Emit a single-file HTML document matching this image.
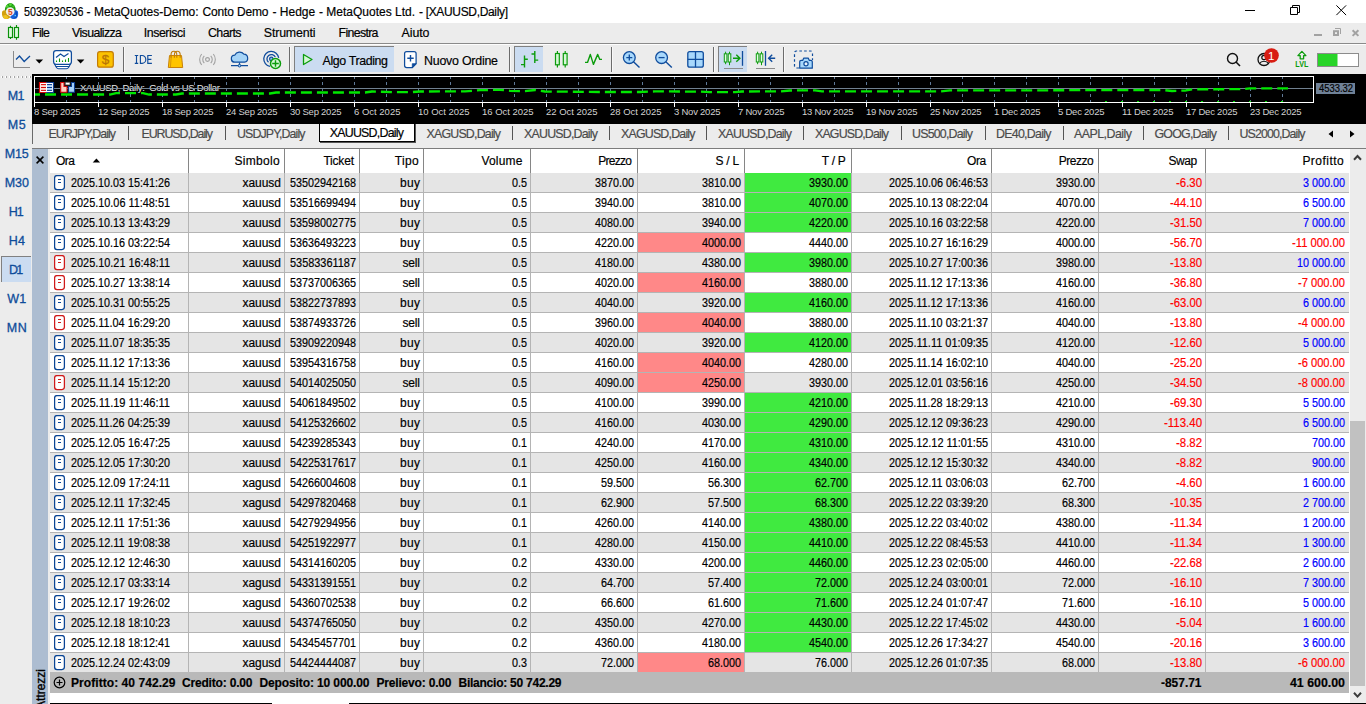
<!DOCTYPE html>
<html><head><meta charset="utf-8"><title>MT5</title><style>
*{box-sizing:border-box;margin:0;padding:0}
html,body{width:1366px;height:704px;overflow:hidden;background:#ececec}
body{font-family:"Liberation Sans",sans-serif;font-size:12px;color:#000;position:relative}
div,span.t,svg{position:absolute}
span.t{white-space:pre;transform-origin:0 0;line-height:16px;height:16px;-webkit-text-stroke:.18px currentColor}
</style></head><body>
<div style="left:0px;top:0px;width:1366px;height:23px;background:#fff;"></div>
<svg style="left:0;top:0" width="24" height="22" viewBox="0 0 24 22">
<path d="M5 10.800C4.300 6.800 7.300 2.900 10.300 2.900c3.100 0 5.900 3.900 5.200 7.900l-2.400 1.400H7.300z" fill="#1f9c10"/>
<circle cx="7.300" cy="6.400" r="1.300" fill="#55d838"/><circle cx="10.400" cy="4.700" r="1.400" fill="#55d838"/><circle cx="13.300" cy="6.300" r="1.100" fill="#3fc026"/>
<path d="M2.300 11.300c1.200-1.600 3.900-1.500 4.900.2l3 5.700c-.8 2-5 2.300-6.600 1-1.700-1.500-2-5-1.300-6.900z" fill="#d2a010"/>
<path d="M3.500 15.500c1.500-1.200 3.500-.5 4.300 1 .5 1 .2 2-.5 2.300-1.500.3-3-.2-3.700-1-.5-.8-.5-1.700-.1-2.300z" fill="#efc220"/>
<path d="M17.800 11.300c-1.200-1.600-3.500-1.500-4.500.2l-3.200 5.700c.8 2 5.200 2.300 6.700 1 1.500-1.500 1.700-5 1-6.900z" fill="#1462dc"/>
<path d="M16.500 11.500c.8 1.500.8 4.500-.3 6-.6.700-1.500 1-2.500 1 2-1.500 2.500-4.500 1.500-7z" fill="#0c48b4"/>
<circle cx="15.300" cy="15.600" r=".8" fill="#58d8ff"/>
<circle cx="10.200" cy="11.500" r="4.300" fill="#f2eeea"/>
<text x="10.300" y="14.500" font-family="Liberation Sans" font-size="8.400" font-weight="700" fill="#d84a10" text-anchor="middle">5</text>
</svg>
<span class="t" style="left:23.50px;top:4.03px;font-size:12px;transform:scaleX(0.8914);">5039230536</span>
<span class="t" style="left:86.60px;top:4.03px;font-size:12px;">- MetaQuotes-Demo:</span>
<span class="t" style="left:202.50px;top:4.03px;font-size:12px;letter-spacing:-0.153px;">Conto Demo</span>
<span class="t" style="left:272.60px;top:4.03px;font-size:12px;letter-spacing:-0.034px;">- Hedge</span>
<span class="t" style="left:319.00px;top:4.03px;font-size:12px;">- MetaQuotes Ltd.</span>
<span class="t" style="left:419.00px;top:4.03px;font-size:12px;letter-spacing:-0.334px;">- [XAUUSD,Daily]</span>
<svg style="left:1236px;top:0" width="130" height="23" viewBox="0 0 130 23" fill="none" stroke="#000" stroke-width="1">
<path d="M9 10.5h10"/>
<path d="M54.5 7.5h7v7h-7z"/><path d="M56.5 7.5v-2h7v7h-2"/>
<path d="M100.4 5.400l9.700 9.700M110.100 5.400l-9.700 9.700"/>
</svg>
<div style="left:0px;top:23px;width:1366px;height:20px;background:#ececec;"></div>
<svg style="left:7px;top:24px" width="14" height="17" viewBox="0 0 14 17" fill="#dcfadc" stroke="#0a900a" stroke-width="1.150">
<path d="M3.500 1.800v13.200M9.500 1v14.800" fill="none"/>
<rect x="1.500" y="3.500" width="4" height="10"/><rect x="7.500" y="3.500" width="4" height="10"/>
</svg>
<span class="t" style="left:32.00px;top:24.90px;font-size:12.4px;letter-spacing:-0.656px;">File</span>
<span class="t" style="left:72.00px;top:24.90px;font-size:12.4px;letter-spacing:-0.618px;">Visualizza</span>
<span class="t" style="left:143.80px;top:24.90px;font-size:12.4px;letter-spacing:-0.469px;">Inserisci</span>
<span class="t" style="left:208.00px;top:24.90px;font-size:12.4px;letter-spacing:-0.600px;">Charts</span>
<span class="t" style="left:263.80px;top:24.90px;font-size:12.4px;letter-spacing:-0.166px;">Strumenti</span>
<span class="t" style="left:338.50px;top:24.90px;font-size:12.4px;letter-spacing:-0.681px;">Finestra</span>
<span class="t" style="left:401.50px;top:24.90px;font-size:12.4px;letter-spacing:-0.062px;">Aiuto</span>
<svg style="left:1310px;top:26px" width="54" height="14" viewBox="0 0 54 14" fill="none" stroke="#a2a2a2">
<rect x="4" y="8" width="8" height="2" fill="#a2a2a2" stroke="none"/>
<rect x="23" y="4.200" width="6" height="5.800" fill="#a2a2a2" stroke="none"/><rect x="25" y="6.200" width="2" height="1.800" fill="#ececec" stroke="none"/>
<path d="M25 2.500h5.500v5.500" stroke-width="1"/>
<path d="M42.600 4.300l5.800 5.600M48.400 4.300l-5.800 5.600" stroke-width="2"/>
</svg>
<div style="left:0px;top:43px;width:1366px;height:1px;background:#8a8a8a;"></div>
<div style="left:0px;top:44px;width:1366px;height:1px;background:#fdfdfd;"></div>
<div style="left:0px;top:74px;width:32px;height:630px;background:#ececec;"></div>
<div style="left:1px;top:76px;width:30px;height:2px;background:repeating-linear-gradient(90deg,#fff 0 1px,#a4a4a4 1px 2px,transparent 2px 4px)"></div>
<div style="left:2px;top:46px;width:2px;height:27px;background:repeating-linear-gradient(180deg,#fff 0 1px,#a4a4a4 1px 2px,transparent 2px 4px)"></div>
<div style="left:1px;top:256px;width:30px;height:26px;background:#cbdcf1;border-left:1px solid #808080;border-top:1px solid #808080"></div>
<span class="t" style="left:7.70px;top:87.87px;font-size:12.5px;color:#0e4c9a;letter-spacing:-0.675px;-webkit-text-stroke:.3px #0e4c9a;">M1</span>
<span class="t" style="left:7.70px;top:116.87px;font-size:12.5px;color:#0e4c9a;letter-spacing:0.725px;-webkit-text-stroke:.3px #0e4c9a;">M5</span>
<span class="t" style="left:4.70px;top:145.87px;font-size:12.5px;color:#0e4c9a;letter-spacing:-0.164px;-webkit-text-stroke:.3px #0e4c9a;">M15</span>
<span class="t" style="left:4.70px;top:174.87px;font-size:12.5px;color:#0e4c9a;letter-spacing:-0.014px;-webkit-text-stroke:.3px #0e4c9a;">M30</span>
<span class="t" style="left:8.80px;top:203.87px;font-size:12.5px;color:#0e4c9a;letter-spacing:-1.084px;-webkit-text-stroke:.3px #0e4c9a;">H1</span>
<span class="t" style="left:8.80px;top:232.87px;font-size:12.5px;color:#0e4c9a;letter-spacing:0.116px;-webkit-text-stroke:.3px #0e4c9a;">H4</span>
<span class="t" style="left:8.90px;top:261.87px;font-size:12.5px;color:#0e4c9a;letter-spacing:-1.684px;-webkit-text-stroke:.3px #0e4c9a;">D1</span>
<span class="t" style="left:7.20px;top:290.87px;font-size:12.5px;color:#0e4c9a;letter-spacing:0.150px;-webkit-text-stroke:.3px #0e4c9a;">W1</span>
<span class="t" style="left:6.70px;top:319.87px;font-size:12.5px;color:#0e4c9a;letter-spacing:0.647px;-webkit-text-stroke:.3px #0e4c9a;">MN</span>
<div style="left:32px;top:124px;width:1334px;height:24px;background:#ececec;"></div>
<div style="left:32px;top:124px;width:1px;height:20px;background:#6a6a6a;"></div>
<span class="t" style="left:48.50px;top:125.90px;font-size:12.4px;color:#4a4a4a;letter-spacing:-0.980px;">EURJPY,Daily</span>
<span class="t" style="left:141.50px;top:125.90px;font-size:12.4px;color:#4a4a4a;letter-spacing:-1.074px;">EURUSD,Daily</span>
<span class="t" style="left:237.00px;top:125.90px;font-size:12.4px;color:#4a4a4a;letter-spacing:-0.889px;">USDJPY,Daily</span>
<span class="t" style="left:426.50px;top:125.90px;font-size:12.4px;color:#4a4a4a;letter-spacing:-0.801px;">XAGUSD,Daily</span>
<span class="t" style="left:524.00px;top:125.90px;font-size:12.4px;color:#4a4a4a;letter-spacing:-0.784px;">XAUUSD,Daily</span>
<span class="t" style="left:621.00px;top:125.90px;font-size:12.4px;color:#4a4a4a;letter-spacing:-0.801px;">XAGUSD,Daily</span>
<span class="t" style="left:718.00px;top:125.90px;font-size:12.4px;color:#4a4a4a;letter-spacing:-0.784px;">XAUUSD,Daily</span>
<span class="t" style="left:815.00px;top:125.90px;font-size:12.4px;color:#4a4a4a;letter-spacing:-0.847px;">XAGUSD,Daily</span>
<span class="t" style="left:912.00px;top:125.90px;font-size:12.4px;color:#4a4a4a;letter-spacing:-0.787px;">US500,Daily</span>
<span class="t" style="left:996.00px;top:125.90px;font-size:12.4px;color:#4a4a4a;letter-spacing:-0.720px;">DE40,Daily</span>
<span class="t" style="left:1074.00px;top:125.90px;font-size:12.4px;color:#4a4a4a;letter-spacing:-0.519px;">AAPL,Daily</span>
<span class="t" style="left:1154.50px;top:125.90px;font-size:12.4px;color:#4a4a4a;letter-spacing:-0.783px;">GOOG,Daily</span>
<span class="t" style="left:1239.50px;top:125.90px;font-size:12.4px;color:#4a4a4a;letter-spacing:-0.888px;">US2000,Daily</span>
<div style="left:128px;top:126px;width:1px;height:14px;background:#555;"></div>
<div style="left:225px;top:126px;width:1px;height:14px;background:#555;"></div>
<div style="left:512px;top:126px;width:1px;height:14px;background:#555;"></div>
<div style="left:609px;top:126px;width:1px;height:14px;background:#555;"></div>
<div style="left:706px;top:126px;width:1px;height:14px;background:#555;"></div>
<div style="left:803px;top:126px;width:1px;height:14px;background:#555;"></div>
<div style="left:901px;top:126px;width:1px;height:14px;background:#555;"></div>
<div style="left:985px;top:126px;width:1px;height:14px;background:#555;"></div>
<div style="left:1063px;top:126px;width:1px;height:14px;background:#555;"></div>
<div style="left:1143px;top:126px;width:1px;height:14px;background:#555;"></div>
<div style="left:1228px;top:126px;width:1px;height:14px;background:#555;"></div>
<div style="left:319px;top:123px;width:96px;height:19px;background:#fff;border:1px solid #000;border-top:0;box-shadow:1px 1px 0 #555"></div>
<span class="t" style="left:329.70px;top:124.90px;font-size:12.4px;letter-spacing:-0.757px;">XAUUSD,Daily</span>
<svg style="left:1326px;top:129px" width="32" height="10" viewBox="0 0 32 10"><path d="M2.500 5l4.500-3.400v6.800zM28.500 5l-4.500-3.400v6.800z" fill="#000"/></svg>
<div style="left:0px;top:45px;width:1366px;height:29px;background:#ececec;"></div>
<div style="left:294px;top:46px;width:100px;height:26px;background:#cbdcf1;border-left:1px solid #808080;border-top:1px solid #808080"></div>
<div style="left:514px;top:46px;width:29px;height:26px;background:#cbdcf1;border-left:1px solid #808080;border-top:1px solid #808080"></div>
<div style="left:718px;top:46px;width:29px;height:26px;background:#cbdcf1;border-left:1px solid #808080;border-top:1px solid #808080"></div>
<div style="left:123px;top:47px;width:1px;height:25px;background:#6c6c6c;"></div><div style="left:124px;top:47px;width:1px;height:25px;background:#f8f8f8;"></div>
<div style="left:289px;top:47px;width:1px;height:25px;background:#6c6c6c;"></div><div style="left:290px;top:47px;width:1px;height:25px;background:#f8f8f8;"></div>
<div style="left:509px;top:47px;width:1px;height:25px;background:#6c6c6c;"></div><div style="left:510px;top:47px;width:1px;height:25px;background:#f8f8f8;"></div>
<div style="left:611px;top:47px;width:1px;height:25px;background:#6c6c6c;"></div><div style="left:612px;top:47px;width:1px;height:25px;background:#f8f8f8;"></div>
<div style="left:713px;top:47px;width:1px;height:25px;background:#6c6c6c;"></div><div style="left:714px;top:47px;width:1px;height:25px;background:#f8f8f8;"></div>
<div style="left:783px;top:47px;width:1px;height:25px;background:#6c6c6c;"></div><div style="left:784px;top:47px;width:1px;height:25px;background:#f8f8f8;"></div>
<svg style="left:0;top:44px" width="1366" height="30" viewBox="0 44 1366 30" fill="none"><path d="M13.5 51v16.500H30" stroke="#8a8a8a" stroke-width="1"/><path d="M16 59.500l3.500-3.500 4.700 5.500L30 56" stroke="#0f4c9c" stroke-width="1.3"/><path d="M35.500 59.500h7.600l-3.800 4z" fill="#000"/><path d="M54.200 63.500l2.300 4q.7 1.200 2 1.200h8q1.300 0 2-1.200l2.300-4" fill="#fff" stroke="#0f4c9c" stroke-width="1.100"/><path d="M55.600 66.500h13.800" stroke="#0f4c9c" stroke-width="1"/><rect x="53.600" y="50.500" width="17.800" height="13.800" rx="2.500" fill="#fff" stroke="#0f4c9c" stroke-width="1.250"/><path d="M56 57.500l4.500-3.500 3.500 2.500 4.500-3" stroke="#0f4c9c" stroke-width="1.200"/><path d="M56.500 62v-1.500M59.500 62v-3.500M62.500 62v-1.500M65.500 62v-2.500M68.500 62v-4" stroke="#0c9c0c" stroke-width="1.100"/><path d="M76.800 59.500h7.600l-3.800 4z" fill="#000"/><rect x="97.600" y="51.700" width="15.700" height="15.500" rx="2.300" fill="#fcc200" stroke="#c47c04" stroke-width="1.200"/><text x="105.500" y="64.300" font-family="Liberation Sans" font-size="13.500" fill="#b87408" stroke="#b87408" stroke-width=".3" text-anchor="middle">$</text><path d="M134.800 55.500h3.400M134.800 63.300h3.400M136.500 55.500v7.800M140.400 55.500h1.700a3.700 3.900 0 0 1 0 7.800h-1.700zM151.900 55.500h-4.100v7.800h4.100M147.800 59.300h3.600" stroke="#0f4c9c" stroke-width="1.150"/><path d="M169.500 55.500h12l1.200 12h-14.400z" fill="#ffc400" stroke="#c8820a" stroke-width="1"/><path d="M171.300 56l-.9 11" stroke="#d8960a" stroke-width="1"/><path d="M171 57.800v-2.900a2.900 3.600 0 0 1 5.800 0v2.900M174.400 57.800v-2.900a2.900 3.600 0 0 1 5.800 0v2.900" stroke="#c07c08" stroke-width="1.100"/><circle cx="207.500" cy="59.500" r="1.900" stroke="#a2a2a2" stroke-width="1.200"/><path d="M204.300 55.800a5.200 5.200 0 0 0 0 7.400M210.700 55.800a5.200 5.200 0 0 1 0 7.400M201.700 54a8.500 8.500 0 0 0 0 11M213.300 54a8.500 8.500 0 0 1 0 11" stroke="#a2a2a2" stroke-width="1.100"/><path d="M235 62.200a3.500 3.500 0 0 1-.3-7 5.500 5.500 0 0 1 9.200-1 4.050 4.050 0 0 1 .6 8z" fill="#a6d4f7" stroke="#0f4c9c" stroke-width="1.200"/><path d="M239.500 62.500v3M231 65.700h17" stroke="#0f4c9c" stroke-width="1.200"/><circle cx="239.500" cy="65.700" r="1.300" fill="#a6d4f7" stroke="#0f4c9c" stroke-width="1"/><circle cx="271.300" cy="58.900" r="1.700" fill="#8cc4f4" stroke="#0f4c9c" stroke-width="1.200"/><path d="M268.500 62.300A4.400 4.400 0 1 1 275.300 57M270 66.300A7.500 7.500 0 1 1 278.700 57.900" stroke="#0f4c9c" stroke-width="1.300"/><circle cx="275.500" cy="63.500" r="5" fill="#d6f8d6" stroke="#0c9c0c" stroke-width="1.500"/><path d="M272.200 63.500h6.600M275.500 60.200v6.600" stroke="#0c9c0c" stroke-width="1.400"/><path d="M303.500 54.500v10l8.500-5z" fill="#d4f8d4" stroke="#0c9c0c" stroke-width="1.300" stroke-linejoin="round"/><path d="M404.600 53.600a2.100 2.100 0 0 1 2.100-2.100h7.300a2.100 2.100 0 0 1 2.100 2.100V63.700l-3.800 3.800h-5.600a2.100 2.100 0 0 1-2.100-2.100z" fill="#fff" stroke="#0f4c9c" stroke-width="1.250"/><path d="M416.100 63.700h-3.800v3.800z" fill="#0f4c9c" stroke="#0f4c9c" stroke-width=".8" stroke-linejoin="round"/><path d="M407.300 58.300h6.400M410.500 55.100v6.400" stroke="#0f4c9c" stroke-width="1.400"/><path d="M524.500 55.500v12M521 64.600h3.500M524.500 59.300h3.300M534.800 51v12M531.500 54h3.300M534.800 60.100h3.400" stroke="#0c9c0c" stroke-width="1.400"/><path d="M557.400 51v16.500M565.200 51v16.500" stroke="#0c9c0c" stroke-width="1.200"/><rect x="555.500" y="53.500" width="3.800" height="11.300" fill="#d6f8d6" stroke="#0c9c0c" stroke-width="1.200"/><rect x="563.300" y="53.500" width="3.800" height="11.300" fill="#d6f8d6" stroke="#0c9c0c" stroke-width="1.200"/><path d="M585 62.400h2.500l2.800-8 3.100 10 4.300-10 2.100 5h2.200" stroke="#0c9c0c" stroke-width="1.400" stroke-linejoin="round"/><path d="M633.500 61.800l6 5.800" stroke="#0f4c9c" stroke-width="1.400"/><circle cx="629.300" cy="57.600" r="5.900" fill="#a8d8fc" stroke="#0f4c9c" stroke-width="1.300"/><path d="M626.300 57.600h6M629.300 54.600v6" stroke="#0f4c9c" stroke-width="1.300"/><path d="M665.800 61.800l6 5.800" stroke="#0f4c9c" stroke-width="1.400"/><circle cx="661.600" cy="57.600" r="5.900" fill="#a8d8fc" stroke="#0f4c9c" stroke-width="1.300"/><path d="M658.600 57.600h6" stroke="#0f4c9c" stroke-width="1.300"/><rect x="687.800" y="51.600" width="15.500" height="15.600" rx="2" fill="#a8d8fc" stroke="#0f4c9c" stroke-width="1.300"/><path d="M695.500 51.600v15.600M687.800 59.400h15.500" stroke="#0f4c9c" stroke-width="1.300"/><path d="M725.6 51.700v12.500M729.5 51.700v13.500" stroke="#0c9c0c" stroke-width="1"/><rect x="724.3" y="53.800" width="2.600" height="8.200" fill="#e4fce4" stroke="#0c9c0c" stroke-width="1"/><rect x="728.2" y="53.800" width="2.600" height="8.200" fill="#e4fce4" stroke="#0c9c0c" stroke-width="1"/><path d="M733 58.300h6.800M736.300 54.800l3.600 3.500-3.600 3.500" stroke="#0c9c0c" stroke-width="1.400"/><path d="M742.500 51v14.800" stroke="#0f4c9c" stroke-width="1.300"/><path d="M724 68.500h19" stroke="#8c8c8c" stroke-width="1"/><path d="M757.6 51.700v12.500M761.5 51.700v13.500" stroke="#0c9c0c" stroke-width="1"/><rect x="756.3" y="53.800" width="2.600" height="8.200" fill="#e4fce4" stroke="#0c9c0c" stroke-width="1"/><rect x="760.2" y="53.800" width="2.600" height="8.200" fill="#e4fce4" stroke="#0c9c0c" stroke-width="1"/><path d="M765.500 51v14.800" stroke="#0f4c9c" stroke-width="1.300"/><path d="M768.600 58.300h6.600M772.200 54.800l-3.600 3.500 3.600 3.500" stroke="#0f4c9c" stroke-width="1.400"/><path d="M756 68.500h19" stroke="#8c8c8c" stroke-width="1"/><path d="M799 68h-2.500a2 2 0 0 1-2-2v-13a2 2 0 0 1 2-2h14a2 2 0 0 1 2 2v7" stroke="#0f4c9c" stroke-width="1.200" stroke-dasharray="2.600 2.200"/><path d="M799.700 61.800a1.500 1.500 0 0 1 1.500-1.500h1.600l1-2.200h4.400l1 2.200h1.600a1.500 1.500 0 0 1 1.500 1.500v6.400h-12.600z" fill="#a8d8fc" stroke="#0f4c9c" stroke-width="1.200" stroke-linejoin="round"/><circle cx="806" cy="63.800" r="2.100" fill="#e8f4fe" stroke="#0f4c9c" stroke-width="1.200"/><circle cx="1232.500" cy="58.500" r="5" stroke="#111" stroke-width="1.400"/><path d="M1236 62l4 4" stroke="#111" stroke-width="1.600"/><circle cx="1264" cy="59.500" r="6" stroke="#111" stroke-width="1.300"/><circle cx="1264" cy="57.500" r="2.200" stroke="#111" stroke-width="1.200"/><path d="M1259.500 63.500a5 4 0 0 1 9 0" stroke="#111" stroke-width="1.200"/><circle cx="1271.500" cy="55.500" r="7.300" fill="#d81c12"/><text x="1271.300" y="60" font-family="Liberation Sans" font-size="11.500" fill="#fff" text-anchor="middle">1</text><path d="M1301.900 51.400l4 4.200h-2.300v3.200h-3.400v-3.200h-2.300z" stroke="#0c9c0c" stroke-width="1.300" stroke-linejoin="round"/><text x="1301.800" y="67.300" font-family="Liberation Sans" font-size="8.300" font-weight="700" fill="#0c9c0c" text-anchor="middle" textLength="13" lengthAdjust="spacingAndGlyphs">LVL</text><rect x="1317.500" y="53.500" width="41" height="13" fill="#fff" stroke="#8c8c8c" stroke-width="1"/><rect x="1318" y="54" width="19.500" height="12" fill="#28d428"/></svg>
<span class="t" style="left:322.50px;top:52.90px;font-size:12.4px;letter-spacing:-0.371px;">Algo Trading</span>
<span class="t" style="left:424.00px;top:52.90px;font-size:12.4px;letter-spacing:-0.223px;">Nuovo Ordine</span>
<div style="left:32px;top:74px;width:1334px;height:50px;background:#000;"></div>
<svg style="left:32px;top:74px" width="1334" height="50" viewBox="32 74 1334 50" fill="none"><path d="M66.5 76v27M98.5 76v27M130.5 76v27M162.5 76v27M194.5 76v27M226.5 76v27M258.5 76v27M290.5 76v27M322.5 76v27M354.5 76v27M386.5 76v27M418.5 76v27M450.5 76v27M482.5 76v27M514.5 76v27M546.5 76v27M578.5 76v27M610.5 76v27M642.5 76v27M674.5 76v27M706.5 76v27M738.5 76v27M770.5 76v27M802.5 76v27M834.5 76v27M866.5 76v27M898.5 76v27M930.5 76v27M962.5 76v27M994.5 76v27M1026.5 76v27M1058.5 76v27M1090.5 76v27M1122.5 76v27M1154.5 76v27M1186.5 76v27M1218.5 76v27M1250.5 76v27M1282.5 76v27" stroke="#607a98" stroke-width="1" stroke-dasharray="3 3"/><path d="M35 88.500H1313" stroke="#708090" stroke-width="1"/><rect x="34.500" y="76.500" width="1279" height="26" stroke="#fff" stroke-width="1"/><path d="M34.5 102v5M98.5 102v5M162.5 102v5M226.5 102v5M290.5 102v5M354.5 102v5M418.5 102v5M482.5 102v5M546.5 102v5M610.5 102v5M674.5 102v5M738.5 102v5M802.5 102v5M866.5 102v5M930.5 102v5M994.5 102v5M1058.5 102v5M1122.5 102v5M1186.5 102v5M1250.5 102v5" stroke="#fff" stroke-width="1"/><clipPath id="cf"><rect x="35" y="77" width="1278" height="25"/></clipPath><path clip-path="url(#cf)" d="M29 94.5 110 94.5 116 93.2 143 93.2 149 94.5 176 94.5 182 93.5 270 93.5 276 92.5 365 92.5 372 91.5 395 92.2 410 92.2 420 91.5 465 91.4 480 90.2 500 89.8 510 90.8 525 91.2 535 90 545 91.5 600 92 640 92 655 91.4 700 91.6 710 92.2 735 92.2 742 91.5 780 91.4 790 90.5 815 90.4 822 91.4 940 91.4 950 90.4 1040 90.3 1150 90 1165 90.2 1172 91 1185 90.6 1192 89.3 1240 89.2 1250 88.4 1288 88.3" stroke="#00e800" stroke-width="2.300" stroke-dasharray="11 5.020"/><path d="M1105 101.500H1292" stroke="#00e800" stroke-width="1" stroke-dasharray="2 14"/><rect x="39.500" y="82.500" width="14" height="10" fill="#fff"/><rect x="41" y="84" width="5" height="7" fill="#ffd8d0"/><rect x="47" y="84" width="5" height="7" fill="#b8dcfc"/><path d="M46.500 82.500h-7v10h7" stroke="#d80808" stroke-width="1.200"/><path d="M46.500 82.500h7v10h-7" stroke="#0c3c90" stroke-width="1.200"/><path d="M41 84.600h5M41 87.500h5M41 90.400h5" stroke="#d80808" stroke-width="1"/><path d="M47 84.600h5M47 87.500h5M47 90.400h5" stroke="#0c3c90" stroke-width="1"/><path d="M60.700 82.500h3.300v4h3v5.800h-6.300z" fill="#ffd0c4" stroke="#d80808" stroke-width="1.100"/><path d="M68.500 86.500h3v-4h3v9.800h-6z" fill="#a8d4fc" stroke="#0c3c90" stroke-width="1.100"/><rect x="65.200" y="82.200" width="4.800" height="2.800" fill="#fff" stroke="#404040" stroke-width=".8"/><rect x="1316" y="83" width="39" height="11" fill="#6f8197"/></svg>
<span class="t" style="left:80.00px;top:79.66px;font-size:9.5px;color:#e8e8e8;letter-spacing:-0.294px;-webkit-text-stroke:0;">XAUUSD, Daily:  Gold vs US Dollar</span>
<div style="left:78px;top:88px;width:145px;height:1px;background:rgba(112,128,144,.75);"></div>
<span class="t" style="left:1318.50px;top:81.20px;font-size:10px;transform:scaleX(0.9404);">4533.32</span>
<span class="t" style="left:34.00px;top:103.86px;font-size:9.5px;color:#d2d2d2;letter-spacing:-0.234px;-webkit-text-stroke:0;">8 Sep 2025</span>
<span class="t" style="left:98.00px;top:103.86px;font-size:9.5px;color:#d2d2d2;letter-spacing:-0.239px;-webkit-text-stroke:0;">12 Sep 2025</span>
<span class="t" style="left:162.00px;top:103.86px;font-size:9.5px;color:#d2d2d2;letter-spacing:-0.239px;-webkit-text-stroke:0;">18 Sep 2025</span>
<span class="t" style="left:226.00px;top:103.86px;font-size:9.5px;color:#d2d2d2;letter-spacing:-0.239px;-webkit-text-stroke:0;">24 Sep 2025</span>
<span class="t" style="left:290.00px;top:103.86px;font-size:9.5px;color:#d2d2d2;letter-spacing:-0.239px;-webkit-text-stroke:0;">30 Sep 2025</span>
<span class="t" style="left:354.00px;top:103.86px;font-size:9.5px;color:#d2d2d2;-webkit-text-stroke:0;">6 Oct 2025</span>
<span class="t" style="left:418.00px;top:103.86px;font-size:9.5px;color:#d2d2d2;letter-spacing:-0.027px;-webkit-text-stroke:0;">10 Oct 2025</span>
<span class="t" style="left:482.00px;top:103.86px;font-size:9.5px;color:#d2d2d2;letter-spacing:-0.027px;-webkit-text-stroke:0;">16 Oct 2025</span>
<span class="t" style="left:546.00px;top:103.86px;font-size:9.5px;color:#d2d2d2;letter-spacing:-0.027px;-webkit-text-stroke:0;">22 Oct 2025</span>
<span class="t" style="left:610.00px;top:103.86px;font-size:9.5px;color:#d2d2d2;letter-spacing:-0.027px;-webkit-text-stroke:0;">28 Oct 2025</span>
<span class="t" style="left:674.00px;top:103.86px;font-size:9.5px;color:#d2d2d2;letter-spacing:-0.233px;-webkit-text-stroke:0;">3 Nov 2025</span>
<span class="t" style="left:738.00px;top:103.86px;font-size:9.5px;color:#d2d2d2;letter-spacing:-0.233px;-webkit-text-stroke:0;">7 Nov 2025</span>
<span class="t" style="left:802.00px;top:103.86px;font-size:9.5px;color:#d2d2d2;letter-spacing:-0.237px;-webkit-text-stroke:0;">13 Nov 2025</span>
<span class="t" style="left:866.00px;top:103.86px;font-size:9.5px;color:#d2d2d2;letter-spacing:-0.237px;-webkit-text-stroke:0;">19 Nov 2025</span>
<span class="t" style="left:930.00px;top:103.86px;font-size:9.5px;color:#d2d2d2;letter-spacing:-0.237px;-webkit-text-stroke:0;">25 Nov 2025</span>
<span class="t" style="left:994.00px;top:103.86px;font-size:9.5px;color:#d2d2d2;letter-spacing:-0.233px;-webkit-text-stroke:0;">1 Dec 2025</span>
<span class="t" style="left:1058.00px;top:103.86px;font-size:9.5px;color:#d2d2d2;letter-spacing:-0.233px;-webkit-text-stroke:0;">5 Dec 2025</span>
<span class="t" style="left:1122.00px;top:103.86px;font-size:9.5px;color:#d2d2d2;letter-spacing:-0.167px;-webkit-text-stroke:0;">11 Dec 2025</span>
<span class="t" style="left:1186.00px;top:103.86px;font-size:9.5px;color:#d2d2d2;letter-spacing:-0.237px;-webkit-text-stroke:0;">17 Dec 2025</span>
<span class="t" style="left:1250.00px;top:103.86px;font-size:9.5px;color:#d2d2d2;letter-spacing:-0.237px;-webkit-text-stroke:0;">23 Dec 2025</span>
<div style="left:32px;top:148px;width:1334px;height:1px;background:#7c7c7c;"></div>
<div style="left:32px;top:149px;width:16px;height:555px;background:#adbdd1;"></div>
<div style="left:48px;top:149px;width:2px;height:555px;background:#ececec;"></div>
<div style="left:50px;top:149px;width:1300px;height:555px;background:#fff;"></div>
<div style="left:1350px;top:149px;width:16px;height:555px;background:#ececec;"></div>
<div style="left:1350px;top:421px;width:15px;height:265px;background:#c1c1c1;"></div>
<svg style="left:1350px;top:149px" width="16" height="555" viewBox="0 0 16 555" fill="none" stroke="#3c3c3c" stroke-width="2"><path d="M4 10.800L7.500 7 11 10.800"/><path d="M4 543.800L7.500 547.600 11 543.800"/></svg>
<svg style="left:35px;top:154.600px" width="10" height="10" viewBox="0 0 10 10"><path d="M1.600 1.600l6.800 6.800M8.400 1.600l-6.800 6.800" stroke="#000" stroke-width="1.550"/></svg>
<div style="left:188px;top:149px;width:1px;height:24px;background:#868686;"></div>
<div style="left:284px;top:149px;width:1px;height:24px;background:#868686;"></div>
<div style="left:359px;top:149px;width:1px;height:24px;background:#868686;"></div>
<div style="left:423px;top:149px;width:1px;height:24px;background:#868686;"></div>
<div style="left:530px;top:149px;width:1px;height:24px;background:#868686;"></div>
<div style="left:637px;top:149px;width:1px;height:24px;background:#868686;"></div>
<div style="left:744px;top:149px;width:1px;height:24px;background:#868686;"></div>
<div style="left:851px;top:149px;width:1px;height:24px;background:#868686;"></div>
<div style="left:991px;top:149px;width:1px;height:24px;background:#868686;"></div>
<div style="left:1098px;top:149px;width:1px;height:24px;background:#868686;"></div>
<div style="left:1205px;top:149px;width:1px;height:24px;background:#868686;"></div>
<span class="t" style="left:56.00px;top:153.03px;font-size:12px;letter-spacing:-0.508px;">Ora</span>
<span class="t" style="left:234.40px;top:153.03px;font-size:12px;letter-spacing:0.323px;">Simbolo</span>
<span class="t" style="left:323.40px;top:153.03px;font-size:12px;letter-spacing:-0.192px;">Ticket</span>
<span class="t" style="left:394.70px;top:153.03px;font-size:12px;letter-spacing:0.365px;">Tipo</span>
<span class="t" style="left:481.40px;top:153.03px;font-size:12px;letter-spacing:0.214px;">Volume</span>
<span class="t" style="left:598.30px;top:153.03px;font-size:12px;letter-spacing:-0.732px;">Prezzo</span>
<span class="t" style="left:715.40px;top:153.03px;font-size:12px;letter-spacing:-0.222px;">S / L</span>
<span class="t" style="left:821.80px;top:153.03px;font-size:12px;letter-spacing:-0.306px;">T / P</span>
<span class="t" style="left:966.90px;top:153.03px;font-size:12px;letter-spacing:-0.308px;">Ora</span>
<span class="t" style="left:1058.70px;top:153.03px;font-size:12px;letter-spacing:-0.472px;">Prezzo</span>
<span class="t" style="left:1168.40px;top:153.03px;font-size:12px;letter-spacing:-0.410px;">Swap</span>
<span class="t" style="left:1302.40px;top:153.03px;font-size:12px;letter-spacing:0.469px;">Profitto</span>
<svg style="left:92px;top:158px" width="9" height="5" viewBox="0 0 9 5"><path d="M0.700 4.500L4.400 0.400 8.100 4.500z" fill="#000"/></svg>
<div style="left:50px;top:173px;width:1299px;height:19px;background:#e5e5e5;"></div>
<div style="left:745px;top:173px;width:106px;height:19px;background:#40ea40;"></div>
<div style="left:50px;top:192px;width:1299px;height:1px;background:#b4b4b4;"></div>
<svg style="left:54px;top:175px" width="12" height="16" viewBox="0 0 12 16" fill="none" stroke="#0a4595"><rect x="0.600" y="0.500" width="9.800" height="14" rx="2.400" fill="#fff" stroke-width="1.250"/><path d="M4 4.500h3M4 7.500h3" stroke-width="1.150"/></svg>
<span class="t" style="left:71.00px;top:175.03px;font-size:12px;transform:scaleX(0.8991);">2025.10.03 15:41:26</span>
<span class="t" style="left:242.50px;top:175.03px;font-size:12px;letter-spacing:-0.041px;">xauusd</span>
<span class="t" style="left:290.00px;top:175.03px;font-size:12px;transform:scaleX(0.8989);">53502942168</span>
<span class="t" style="left:400.00px;top:175.03px;font-size:12px;letter-spacing:0.320px;">buy</span>
<span class="t" style="left:512.00px;top:175.03px;font-size:12px;transform:scaleX(0.8989);">0.5</span>
<span class="t" style="left:595.00px;top:175.03px;font-size:12px;transform:scaleX(0.8988);">3870.00</span>
<span class="t" style="left:702.00px;top:175.03px;font-size:12px;transform:scaleX(0.8988);">3810.00</span>
<span class="t" style="left:809.00px;top:175.03px;font-size:12px;transform:scaleX(0.8988);">3930.00</span>
<span class="t" style="left:889.00px;top:175.03px;font-size:12px;transform:scaleX(0.8991);">2025.10.06 06:46:53</span>
<span class="t" style="left:1056.00px;top:175.03px;font-size:12px;transform:scaleX(0.8988);">3930.00</span>
<span class="t" style="left:1176.00px;top:175.03px;font-size:12px;color:#ff0000;transform:scaleX(0.9503);">-6.30</span>
<span class="t" style="left:1303.00px;top:175.03px;font-size:12px;color:#0000ff;transform:scaleX(0.8990);">3 000.00</span>
<div style="left:745px;top:193px;width:106px;height:19px;background:#40ea40;"></div>
<div style="left:50px;top:212px;width:1299px;height:1px;background:#b4b4b4;"></div>
<svg style="left:54px;top:195px" width="12" height="16" viewBox="0 0 12 16" fill="none" stroke="#0a4595"><rect x="0.600" y="0.500" width="9.800" height="14" rx="2.400" fill="#fff" stroke-width="1.250"/><path d="M4 4.500h3M4 7.500h3" stroke-width="1.150"/></svg>
<span class="t" style="left:71.00px;top:195.03px;font-size:12px;transform:scaleX(0.9064);">2025.10.06 11:48:51</span>
<span class="t" style="left:242.50px;top:195.03px;font-size:12px;letter-spacing:-0.041px;">xauusd</span>
<span class="t" style="left:290.00px;top:195.03px;font-size:12px;transform:scaleX(0.8989);">53516699494</span>
<span class="t" style="left:400.00px;top:195.03px;font-size:12px;letter-spacing:0.320px;">buy</span>
<span class="t" style="left:512.00px;top:195.03px;font-size:12px;transform:scaleX(0.8989);">0.5</span>
<span class="t" style="left:595.00px;top:195.03px;font-size:12px;transform:scaleX(0.8988);">3940.00</span>
<span class="t" style="left:702.00px;top:195.03px;font-size:12px;transform:scaleX(0.8988);">3810.00</span>
<span class="t" style="left:809.00px;top:195.03px;font-size:12px;transform:scaleX(0.8988);">4070.00</span>
<span class="t" style="left:889.00px;top:195.03px;font-size:12px;transform:scaleX(0.8991);">2025.10.13 08:22:04</span>
<span class="t" style="left:1056.00px;top:195.03px;font-size:12px;transform:scaleX(0.8988);">4070.00</span>
<span class="t" style="left:1170.00px;top:195.03px;font-size:12px;color:#ff0000;transform:scaleX(0.9403);">-44.10</span>
<span class="t" style="left:1303.00px;top:195.03px;font-size:12px;color:#0000ff;transform:scaleX(0.8990);">6 500.00</span>
<div style="left:50px;top:213px;width:1299px;height:19px;background:#e5e5e5;"></div>
<div style="left:745px;top:213px;width:106px;height:19px;background:#40ea40;"></div>
<div style="left:50px;top:232px;width:1299px;height:1px;background:#b4b4b4;"></div>
<svg style="left:54px;top:215px" width="12" height="16" viewBox="0 0 12 16" fill="none" stroke="#0a4595"><rect x="0.600" y="0.500" width="9.800" height="14" rx="2.400" fill="#fff" stroke-width="1.250"/><path d="M4 4.500h3M4 7.500h3" stroke-width="1.150"/></svg>
<span class="t" style="left:71.00px;top:215.03px;font-size:12px;transform:scaleX(0.8991);">2025.10.13 13:43:29</span>
<span class="t" style="left:242.50px;top:215.03px;font-size:12px;letter-spacing:-0.041px;">xauusd</span>
<span class="t" style="left:290.00px;top:215.03px;font-size:12px;transform:scaleX(0.8989);">53598002775</span>
<span class="t" style="left:400.00px;top:215.03px;font-size:12px;letter-spacing:0.320px;">buy</span>
<span class="t" style="left:512.00px;top:215.03px;font-size:12px;transform:scaleX(0.8989);">0.5</span>
<span class="t" style="left:595.00px;top:215.03px;font-size:12px;transform:scaleX(0.8988);">4080.00</span>
<span class="t" style="left:702.00px;top:215.03px;font-size:12px;transform:scaleX(0.8988);">3940.00</span>
<span class="t" style="left:809.00px;top:215.03px;font-size:12px;transform:scaleX(0.8988);">4220.00</span>
<span class="t" style="left:889.00px;top:215.03px;font-size:12px;transform:scaleX(0.8991);">2025.10.16 03:22:58</span>
<span class="t" style="left:1056.00px;top:215.03px;font-size:12px;transform:scaleX(0.8988);">4220.00</span>
<span class="t" style="left:1170.00px;top:215.03px;font-size:12px;color:#ff0000;transform:scaleX(0.9403);">-31.50</span>
<span class="t" style="left:1303.00px;top:215.03px;font-size:12px;color:#0000ff;transform:scaleX(0.8990);">7 000.00</span>
<div style="left:638px;top:233px;width:106px;height:19px;background:#ff8888;"></div>
<div style="left:50px;top:252px;width:1299px;height:1px;background:#b4b4b4;"></div>
<svg style="left:54px;top:235px" width="12" height="16" viewBox="0 0 12 16" fill="none" stroke="#0a4595"><rect x="0.600" y="0.500" width="9.800" height="14" rx="2.400" fill="#fff" stroke-width="1.250"/><path d="M4 4.500h3M4 7.500h3" stroke-width="1.150"/></svg>
<span class="t" style="left:71.00px;top:235.03px;font-size:12px;transform:scaleX(0.8991);">2025.10.16 03:22:54</span>
<span class="t" style="left:242.50px;top:235.03px;font-size:12px;letter-spacing:-0.041px;">xauusd</span>
<span class="t" style="left:290.00px;top:235.03px;font-size:12px;transform:scaleX(0.8989);">53636493223</span>
<span class="t" style="left:400.00px;top:235.03px;font-size:12px;letter-spacing:0.320px;">buy</span>
<span class="t" style="left:512.00px;top:235.03px;font-size:12px;transform:scaleX(0.8989);">0.5</span>
<span class="t" style="left:595.00px;top:235.03px;font-size:12px;transform:scaleX(0.8988);">4220.00</span>
<span class="t" style="left:702.00px;top:235.03px;font-size:12px;transform:scaleX(0.8988);">4000.00</span>
<span class="t" style="left:809.00px;top:235.03px;font-size:12px;transform:scaleX(0.8988);">4440.00</span>
<span class="t" style="left:889.00px;top:235.03px;font-size:12px;transform:scaleX(0.8991);">2025.10.27 16:16:29</span>
<span class="t" style="left:1056.00px;top:235.03px;font-size:12px;transform:scaleX(0.8988);">4000.00</span>
<span class="t" style="left:1170.00px;top:235.03px;font-size:12px;color:#ff0000;transform:scaleX(0.9403);">-56.70</span>
<span class="t" style="left:1292.00px;top:235.03px;font-size:12px;color:#ff0000;transform:scaleX(0.9381);">-11 000.00</span>
<div style="left:50px;top:253px;width:1299px;height:19px;background:#e5e5e5;"></div>
<div style="left:745px;top:253px;width:106px;height:19px;background:#40ea40;"></div>
<div style="left:50px;top:272px;width:1299px;height:1px;background:#b4b4b4;"></div>
<svg style="left:54px;top:255px" width="12" height="16" viewBox="0 0 12 16" fill="none" stroke="#cf1a1a"><rect x="0.600" y="0.500" width="9.800" height="14" rx="2.400" fill="#fff" stroke-width="1.250"/><path d="M4 4.500h3M4 7.500h3" stroke-width="1.150"/></svg>
<span class="t" style="left:71.00px;top:255.03px;font-size:12px;transform:scaleX(0.9064);">2025.10.21 16:48:11</span>
<span class="t" style="left:242.50px;top:255.03px;font-size:12px;letter-spacing:-0.041px;">xauusd</span>
<span class="t" style="left:290.00px;top:255.03px;font-size:12px;transform:scaleX(0.9100);">53583361187</span>
<span class="t" style="left:402.50px;top:255.03px;font-size:12px;letter-spacing:-0.172px;">sell</span>
<span class="t" style="left:512.00px;top:255.03px;font-size:12px;transform:scaleX(0.8989);">0.5</span>
<span class="t" style="left:595.00px;top:255.03px;font-size:12px;transform:scaleX(0.8988);">4180.00</span>
<span class="t" style="left:702.00px;top:255.03px;font-size:12px;transform:scaleX(0.8988);">4380.00</span>
<span class="t" style="left:809.00px;top:255.03px;font-size:12px;transform:scaleX(0.8988);">3980.00</span>
<span class="t" style="left:889.00px;top:255.03px;font-size:12px;transform:scaleX(0.8991);">2025.10.27 17:00:36</span>
<span class="t" style="left:1056.00px;top:255.03px;font-size:12px;transform:scaleX(0.8988);">3980.00</span>
<span class="t" style="left:1170.00px;top:255.03px;font-size:12px;color:#ff0000;transform:scaleX(0.9403);">-13.80</span>
<span class="t" style="left:1297.00px;top:255.03px;font-size:12px;color:#0000ff;transform:scaleX(0.8990);">10 000.00</span>
<div style="left:638px;top:273px;width:106px;height:19px;background:#ff8888;"></div>
<div style="left:50px;top:292px;width:1299px;height:1px;background:#b4b4b4;"></div>
<svg style="left:54px;top:275px" width="12" height="16" viewBox="0 0 12 16" fill="none" stroke="#cf1a1a"><rect x="0.600" y="0.500" width="9.800" height="14" rx="2.400" fill="#fff" stroke-width="1.250"/><path d="M4 4.500h3M4 7.500h3" stroke-width="1.150"/></svg>
<span class="t" style="left:71.00px;top:275.03px;font-size:12px;transform:scaleX(0.8991);">2025.10.27 13:38:14</span>
<span class="t" style="left:242.50px;top:275.03px;font-size:12px;letter-spacing:-0.041px;">xauusd</span>
<span class="t" style="left:290.00px;top:275.03px;font-size:12px;transform:scaleX(0.8989);">53737006365</span>
<span class="t" style="left:402.50px;top:275.03px;font-size:12px;letter-spacing:-0.172px;">sell</span>
<span class="t" style="left:512.00px;top:275.03px;font-size:12px;transform:scaleX(0.8989);">0.5</span>
<span class="t" style="left:595.00px;top:275.03px;font-size:12px;transform:scaleX(0.8988);">4020.00</span>
<span class="t" style="left:702.00px;top:275.03px;font-size:12px;transform:scaleX(0.8988);">4160.00</span>
<span class="t" style="left:809.00px;top:275.03px;font-size:12px;transform:scaleX(0.8988);">3880.00</span>
<span class="t" style="left:889.00px;top:275.03px;font-size:12px;transform:scaleX(0.9064);">2025.11.12 17:13:36</span>
<span class="t" style="left:1056.00px;top:275.03px;font-size:12px;transform:scaleX(0.8988);">4160.00</span>
<span class="t" style="left:1170.00px;top:275.03px;font-size:12px;color:#ff0000;transform:scaleX(0.9403);">-36.80</span>
<span class="t" style="left:1298.00px;top:275.03px;font-size:12px;color:#ff0000;transform:scaleX(0.9267);">-7 000.00</span>
<div style="left:50px;top:293px;width:1299px;height:19px;background:#e5e5e5;"></div>
<div style="left:745px;top:293px;width:106px;height:19px;background:#40ea40;"></div>
<div style="left:50px;top:312px;width:1299px;height:1px;background:#b4b4b4;"></div>
<svg style="left:54px;top:295px" width="12" height="16" viewBox="0 0 12 16" fill="none" stroke="#0a4595"><rect x="0.600" y="0.500" width="9.800" height="14" rx="2.400" fill="#fff" stroke-width="1.250"/><path d="M4 4.500h3M4 7.500h3" stroke-width="1.150"/></svg>
<span class="t" style="left:71.00px;top:295.03px;font-size:12px;transform:scaleX(0.8991);">2025.10.31 00:55:25</span>
<span class="t" style="left:242.50px;top:295.03px;font-size:12px;letter-spacing:-0.041px;">xauusd</span>
<span class="t" style="left:290.00px;top:295.03px;font-size:12px;transform:scaleX(0.8989);">53822737893</span>
<span class="t" style="left:400.00px;top:295.03px;font-size:12px;letter-spacing:0.320px;">buy</span>
<span class="t" style="left:512.00px;top:295.03px;font-size:12px;transform:scaleX(0.8989);">0.5</span>
<span class="t" style="left:595.00px;top:295.03px;font-size:12px;transform:scaleX(0.8988);">4040.00</span>
<span class="t" style="left:702.00px;top:295.03px;font-size:12px;transform:scaleX(0.8988);">3920.00</span>
<span class="t" style="left:809.00px;top:295.03px;font-size:12px;transform:scaleX(0.8988);">4160.00</span>
<span class="t" style="left:889.00px;top:295.03px;font-size:12px;transform:scaleX(0.9064);">2025.11.12 17:13:36</span>
<span class="t" style="left:1056.00px;top:295.03px;font-size:12px;transform:scaleX(0.8988);">4160.00</span>
<span class="t" style="left:1170.00px;top:295.03px;font-size:12px;color:#ff0000;transform:scaleX(0.9403);">-63.00</span>
<span class="t" style="left:1303.00px;top:295.03px;font-size:12px;color:#0000ff;transform:scaleX(0.8990);">6 000.00</span>
<div style="left:638px;top:313px;width:106px;height:19px;background:#ff8888;"></div>
<div style="left:50px;top:332px;width:1299px;height:1px;background:#b4b4b4;"></div>
<svg style="left:54px;top:315px" width="12" height="16" viewBox="0 0 12 16" fill="none" stroke="#cf1a1a"><rect x="0.600" y="0.500" width="9.800" height="14" rx="2.400" fill="#fff" stroke-width="1.250"/><path d="M4 4.500h3M4 7.500h3" stroke-width="1.150"/></svg>
<span class="t" style="left:71.00px;top:315.03px;font-size:12px;transform:scaleX(0.9064);">2025.11.04 16:29:20</span>
<span class="t" style="left:242.50px;top:315.03px;font-size:12px;letter-spacing:-0.041px;">xauusd</span>
<span class="t" style="left:290.00px;top:315.03px;font-size:12px;transform:scaleX(0.8989);">53874933726</span>
<span class="t" style="left:402.50px;top:315.03px;font-size:12px;letter-spacing:-0.172px;">sell</span>
<span class="t" style="left:512.00px;top:315.03px;font-size:12px;transform:scaleX(0.8989);">0.5</span>
<span class="t" style="left:595.00px;top:315.03px;font-size:12px;transform:scaleX(0.8988);">3960.00</span>
<span class="t" style="left:702.00px;top:315.03px;font-size:12px;transform:scaleX(0.8988);">4040.00</span>
<span class="t" style="left:809.00px;top:315.03px;font-size:12px;transform:scaleX(0.8988);">3880.00</span>
<span class="t" style="left:889.00px;top:315.03px;font-size:12px;transform:scaleX(0.9064);">2025.11.10 03:21:37</span>
<span class="t" style="left:1056.00px;top:315.03px;font-size:12px;transform:scaleX(0.8988);">4040.00</span>
<span class="t" style="left:1170.00px;top:315.03px;font-size:12px;color:#ff0000;transform:scaleX(0.9403);">-13.80</span>
<span class="t" style="left:1298.00px;top:315.03px;font-size:12px;color:#ff0000;transform:scaleX(0.9267);">-4 000.00</span>
<div style="left:50px;top:333px;width:1299px;height:19px;background:#e5e5e5;"></div>
<div style="left:745px;top:333px;width:106px;height:19px;background:#40ea40;"></div>
<div style="left:50px;top:352px;width:1299px;height:1px;background:#b4b4b4;"></div>
<svg style="left:54px;top:335px" width="12" height="16" viewBox="0 0 12 16" fill="none" stroke="#0a4595"><rect x="0.600" y="0.500" width="9.800" height="14" rx="2.400" fill="#fff" stroke-width="1.250"/><path d="M4 4.500h3M4 7.500h3" stroke-width="1.150"/></svg>
<span class="t" style="left:71.00px;top:335.03px;font-size:12px;transform:scaleX(0.9064);">2025.11.07 18:35:35</span>
<span class="t" style="left:242.50px;top:335.03px;font-size:12px;letter-spacing:-0.041px;">xauusd</span>
<span class="t" style="left:290.00px;top:335.03px;font-size:12px;transform:scaleX(0.8989);">53909220948</span>
<span class="t" style="left:400.00px;top:335.03px;font-size:12px;letter-spacing:0.320px;">buy</span>
<span class="t" style="left:512.00px;top:335.03px;font-size:12px;transform:scaleX(0.8989);">0.5</span>
<span class="t" style="left:595.00px;top:335.03px;font-size:12px;transform:scaleX(0.8988);">4020.00</span>
<span class="t" style="left:702.00px;top:335.03px;font-size:12px;transform:scaleX(0.8988);">3920.00</span>
<span class="t" style="left:809.00px;top:335.03px;font-size:12px;transform:scaleX(0.8988);">4120.00</span>
<span class="t" style="left:889.00px;top:335.03px;font-size:12px;transform:scaleX(0.9139);">2025.11.11 01:09:35</span>
<span class="t" style="left:1056.00px;top:335.03px;font-size:12px;transform:scaleX(0.8988);">4120.00</span>
<span class="t" style="left:1170.00px;top:335.03px;font-size:12px;color:#ff0000;transform:scaleX(0.9403);">-12.60</span>
<span class="t" style="left:1303.00px;top:335.03px;font-size:12px;color:#0000ff;transform:scaleX(0.8990);">5 000.00</span>
<div style="left:638px;top:353px;width:106px;height:19px;background:#ff8888;"></div>
<div style="left:50px;top:372px;width:1299px;height:1px;background:#b4b4b4;"></div>
<svg style="left:54px;top:355px" width="12" height="16" viewBox="0 0 12 16" fill="none" stroke="#0a4595"><rect x="0.600" y="0.500" width="9.800" height="14" rx="2.400" fill="#fff" stroke-width="1.250"/><path d="M4 4.500h3M4 7.500h3" stroke-width="1.150"/></svg>
<span class="t" style="left:71.00px;top:355.03px;font-size:12px;transform:scaleX(0.9064);">2025.11.12 17:13:36</span>
<span class="t" style="left:242.50px;top:355.03px;font-size:12px;letter-spacing:-0.041px;">xauusd</span>
<span class="t" style="left:290.00px;top:355.03px;font-size:12px;transform:scaleX(0.8989);">53954316758</span>
<span class="t" style="left:400.00px;top:355.03px;font-size:12px;letter-spacing:0.320px;">buy</span>
<span class="t" style="left:512.00px;top:355.03px;font-size:12px;transform:scaleX(0.8989);">0.5</span>
<span class="t" style="left:595.00px;top:355.03px;font-size:12px;transform:scaleX(0.8988);">4160.00</span>
<span class="t" style="left:702.00px;top:355.03px;font-size:12px;transform:scaleX(0.8988);">4040.00</span>
<span class="t" style="left:809.00px;top:355.03px;font-size:12px;transform:scaleX(0.8988);">4280.00</span>
<span class="t" style="left:889.00px;top:355.03px;font-size:12px;transform:scaleX(0.9064);">2025.11.14 16:02:10</span>
<span class="t" style="left:1056.00px;top:355.03px;font-size:12px;transform:scaleX(0.8988);">4040.00</span>
<span class="t" style="left:1170.00px;top:355.03px;font-size:12px;color:#ff0000;transform:scaleX(0.9403);">-25.20</span>
<span class="t" style="left:1298.00px;top:355.03px;font-size:12px;color:#ff0000;transform:scaleX(0.9267);">-6 000.00</span>
<div style="left:50px;top:373px;width:1299px;height:19px;background:#e5e5e5;"></div>
<div style="left:638px;top:373px;width:106px;height:19px;background:#ff8888;"></div>
<div style="left:50px;top:392px;width:1299px;height:1px;background:#b4b4b4;"></div>
<svg style="left:54px;top:375px" width="12" height="16" viewBox="0 0 12 16" fill="none" stroke="#cf1a1a"><rect x="0.600" y="0.500" width="9.800" height="14" rx="2.400" fill="#fff" stroke-width="1.250"/><path d="M4 4.500h3M4 7.500h3" stroke-width="1.150"/></svg>
<span class="t" style="left:71.00px;top:375.03px;font-size:12px;transform:scaleX(0.9064);">2025.11.14 15:12:20</span>
<span class="t" style="left:242.50px;top:375.03px;font-size:12px;letter-spacing:-0.041px;">xauusd</span>
<span class="t" style="left:290.00px;top:375.03px;font-size:12px;transform:scaleX(0.8989);">54014025050</span>
<span class="t" style="left:402.50px;top:375.03px;font-size:12px;letter-spacing:-0.172px;">sell</span>
<span class="t" style="left:512.00px;top:375.03px;font-size:12px;transform:scaleX(0.8989);">0.5</span>
<span class="t" style="left:595.00px;top:375.03px;font-size:12px;transform:scaleX(0.8988);">4090.00</span>
<span class="t" style="left:702.00px;top:375.03px;font-size:12px;transform:scaleX(0.8988);">4250.00</span>
<span class="t" style="left:809.00px;top:375.03px;font-size:12px;transform:scaleX(0.8988);">3930.00</span>
<span class="t" style="left:889.00px;top:375.03px;font-size:12px;transform:scaleX(0.8991);">2025.12.01 03:56:16</span>
<span class="t" style="left:1056.00px;top:375.03px;font-size:12px;transform:scaleX(0.8988);">4250.00</span>
<span class="t" style="left:1170.00px;top:375.03px;font-size:12px;color:#ff0000;transform:scaleX(0.9403);">-34.50</span>
<span class="t" style="left:1298.00px;top:375.03px;font-size:12px;color:#ff0000;transform:scaleX(0.9267);">-8 000.00</span>
<div style="left:745px;top:393px;width:106px;height:19px;background:#40ea40;"></div>
<div style="left:50px;top:412px;width:1299px;height:1px;background:#b4b4b4;"></div>
<svg style="left:54px;top:395px" width="12" height="16" viewBox="0 0 12 16" fill="none" stroke="#0a4595"><rect x="0.600" y="0.500" width="9.800" height="14" rx="2.400" fill="#fff" stroke-width="1.250"/><path d="M4 4.500h3M4 7.500h3" stroke-width="1.150"/></svg>
<span class="t" style="left:71.00px;top:395.03px;font-size:12px;transform:scaleX(0.9215);">2025.11.19 11:46:11</span>
<span class="t" style="left:242.50px;top:395.03px;font-size:12px;letter-spacing:-0.041px;">xauusd</span>
<span class="t" style="left:290.00px;top:395.03px;font-size:12px;transform:scaleX(0.8989);">54061849502</span>
<span class="t" style="left:400.00px;top:395.03px;font-size:12px;letter-spacing:0.320px;">buy</span>
<span class="t" style="left:512.00px;top:395.03px;font-size:12px;transform:scaleX(0.8989);">0.5</span>
<span class="t" style="left:595.00px;top:395.03px;font-size:12px;transform:scaleX(0.8988);">4100.00</span>
<span class="t" style="left:702.00px;top:395.03px;font-size:12px;transform:scaleX(0.8988);">3990.00</span>
<span class="t" style="left:809.00px;top:395.03px;font-size:12px;transform:scaleX(0.8988);">4210.00</span>
<span class="t" style="left:889.00px;top:395.03px;font-size:12px;transform:scaleX(0.9064);">2025.11.28 18:29:13</span>
<span class="t" style="left:1056.00px;top:395.03px;font-size:12px;transform:scaleX(0.8988);">4210.00</span>
<span class="t" style="left:1170.00px;top:395.03px;font-size:12px;color:#ff0000;transform:scaleX(0.9403);">-69.30</span>
<span class="t" style="left:1303.00px;top:395.03px;font-size:12px;color:#0000ff;transform:scaleX(0.8990);">5 500.00</span>
<div style="left:50px;top:413px;width:1299px;height:19px;background:#e5e5e5;"></div>
<div style="left:745px;top:413px;width:106px;height:19px;background:#40ea40;"></div>
<div style="left:50px;top:432px;width:1299px;height:1px;background:#b4b4b4;"></div>
<svg style="left:54px;top:415px" width="12" height="16" viewBox="0 0 12 16" fill="none" stroke="#0a4595"><rect x="0.600" y="0.500" width="9.800" height="14" rx="2.400" fill="#fff" stroke-width="1.250"/><path d="M4 4.500h3M4 7.500h3" stroke-width="1.150"/></svg>
<span class="t" style="left:71.00px;top:415.03px;font-size:12px;transform:scaleX(0.9064);">2025.11.26 04:25:39</span>
<span class="t" style="left:242.50px;top:415.03px;font-size:12px;letter-spacing:-0.041px;">xauusd</span>
<span class="t" style="left:290.00px;top:415.03px;font-size:12px;transform:scaleX(0.8989);">54125326602</span>
<span class="t" style="left:400.00px;top:415.03px;font-size:12px;letter-spacing:0.320px;">buy</span>
<span class="t" style="left:512.00px;top:415.03px;font-size:12px;transform:scaleX(0.8989);">0.5</span>
<span class="t" style="left:595.00px;top:415.03px;font-size:12px;transform:scaleX(0.8988);">4160.00</span>
<span class="t" style="left:702.00px;top:415.03px;font-size:12px;transform:scaleX(0.8988);">4030.00</span>
<span class="t" style="left:809.00px;top:415.03px;font-size:12px;transform:scaleX(0.8988);">4290.00</span>
<span class="t" style="left:889.00px;top:415.03px;font-size:12px;transform:scaleX(0.8991);">2025.12.12 09:36:23</span>
<span class="t" style="left:1056.00px;top:415.03px;font-size:12px;transform:scaleX(0.8988);">4290.00</span>
<span class="t" style="left:1164.00px;top:415.03px;font-size:12px;color:#ff0000;transform:scaleX(0.9545);">-113.40</span>
<span class="t" style="left:1303.00px;top:415.03px;font-size:12px;color:#0000ff;transform:scaleX(0.8990);">6 500.00</span>
<div style="left:745px;top:433px;width:106px;height:19px;background:#40ea40;"></div>
<div style="left:50px;top:452px;width:1299px;height:1px;background:#b4b4b4;"></div>
<svg style="left:54px;top:435px" width="12" height="16" viewBox="0 0 12 16" fill="none" stroke="#0a4595"><rect x="0.600" y="0.500" width="9.800" height="14" rx="2.400" fill="#fff" stroke-width="1.250"/><path d="M4 4.500h3M4 7.500h3" stroke-width="1.150"/></svg>
<span class="t" style="left:71.00px;top:435.03px;font-size:12px;transform:scaleX(0.8991);">2025.12.05 16:47:25</span>
<span class="t" style="left:242.50px;top:435.03px;font-size:12px;letter-spacing:-0.041px;">xauusd</span>
<span class="t" style="left:290.00px;top:435.03px;font-size:12px;transform:scaleX(0.8989);">54239285343</span>
<span class="t" style="left:400.00px;top:435.03px;font-size:12px;letter-spacing:0.320px;">buy</span>
<span class="t" style="left:512.00px;top:435.03px;font-size:12px;transform:scaleX(0.8989);">0.1</span>
<span class="t" style="left:595.00px;top:435.03px;font-size:12px;transform:scaleX(0.8988);">4240.00</span>
<span class="t" style="left:702.00px;top:435.03px;font-size:12px;transform:scaleX(0.8988);">4170.00</span>
<span class="t" style="left:809.00px;top:435.03px;font-size:12px;transform:scaleX(0.8988);">4310.00</span>
<span class="t" style="left:889.00px;top:435.03px;font-size:12px;transform:scaleX(0.9064);">2025.12.12 11:01:55</span>
<span class="t" style="left:1056.00px;top:435.03px;font-size:12px;transform:scaleX(0.8988);">4310.00</span>
<span class="t" style="left:1176.00px;top:435.03px;font-size:12px;color:#ff0000;transform:scaleX(0.9503);">-8.82</span>
<span class="t" style="left:1312.00px;top:435.03px;font-size:12px;color:#0000ff;transform:scaleX(0.8991);">700.00</span>
<div style="left:50px;top:453px;width:1299px;height:19px;background:#e5e5e5;"></div>
<div style="left:745px;top:453px;width:106px;height:19px;background:#40ea40;"></div>
<div style="left:50px;top:472px;width:1299px;height:1px;background:#b4b4b4;"></div>
<svg style="left:54px;top:455px" width="12" height="16" viewBox="0 0 12 16" fill="none" stroke="#0a4595"><rect x="0.600" y="0.500" width="9.800" height="14" rx="2.400" fill="#fff" stroke-width="1.250"/><path d="M4 4.500h3M4 7.500h3" stroke-width="1.150"/></svg>
<span class="t" style="left:71.00px;top:455.03px;font-size:12px;transform:scaleX(0.8991);">2025.12.05 17:30:20</span>
<span class="t" style="left:242.50px;top:455.03px;font-size:12px;letter-spacing:-0.041px;">xauusd</span>
<span class="t" style="left:290.00px;top:455.03px;font-size:12px;transform:scaleX(0.8989);">54225317617</span>
<span class="t" style="left:400.00px;top:455.03px;font-size:12px;letter-spacing:0.320px;">buy</span>
<span class="t" style="left:512.00px;top:455.03px;font-size:12px;transform:scaleX(0.8989);">0.1</span>
<span class="t" style="left:595.00px;top:455.03px;font-size:12px;transform:scaleX(0.8988);">4250.00</span>
<span class="t" style="left:702.00px;top:455.03px;font-size:12px;transform:scaleX(0.8988);">4160.00</span>
<span class="t" style="left:809.00px;top:455.03px;font-size:12px;transform:scaleX(0.8988);">4340.00</span>
<span class="t" style="left:889.00px;top:455.03px;font-size:12px;transform:scaleX(0.8991);">2025.12.12 15:30:32</span>
<span class="t" style="left:1056.00px;top:455.03px;font-size:12px;transform:scaleX(0.8988);">4340.00</span>
<span class="t" style="left:1176.00px;top:455.03px;font-size:12px;color:#ff0000;transform:scaleX(0.9503);">-8.82</span>
<span class="t" style="left:1312.00px;top:455.03px;font-size:12px;color:#0000ff;transform:scaleX(0.8991);">900.00</span>
<div style="left:745px;top:473px;width:106px;height:19px;background:#40ea40;"></div>
<div style="left:50px;top:492px;width:1299px;height:1px;background:#b4b4b4;"></div>
<svg style="left:54px;top:475px" width="12" height="16" viewBox="0 0 12 16" fill="none" stroke="#0a4595"><rect x="0.600" y="0.500" width="9.800" height="14" rx="2.400" fill="#fff" stroke-width="1.250"/><path d="M4 4.500h3M4 7.500h3" stroke-width="1.150"/></svg>
<span class="t" style="left:71.00px;top:475.03px;font-size:12px;transform:scaleX(0.9064);">2025.12.09 17:24:11</span>
<span class="t" style="left:242.50px;top:475.03px;font-size:12px;letter-spacing:-0.041px;">xagusd</span>
<span class="t" style="left:290.00px;top:475.03px;font-size:12px;transform:scaleX(0.8989);">54266004608</span>
<span class="t" style="left:400.00px;top:475.03px;font-size:12px;letter-spacing:0.320px;">buy</span>
<span class="t" style="left:512.00px;top:475.03px;font-size:12px;transform:scaleX(0.8989);">0.1</span>
<span class="t" style="left:601.00px;top:475.03px;font-size:12px;transform:scaleX(0.8991);">59.500</span>
<span class="t" style="left:708.00px;top:475.03px;font-size:12px;transform:scaleX(0.8991);">56.300</span>
<span class="t" style="left:815.00px;top:475.03px;font-size:12px;transform:scaleX(0.8991);">62.700</span>
<span class="t" style="left:889.00px;top:475.03px;font-size:12px;transform:scaleX(0.9064);">2025.12.11 03:06:03</span>
<span class="t" style="left:1062.00px;top:475.03px;font-size:12px;transform:scaleX(0.8991);">62.700</span>
<span class="t" style="left:1176.00px;top:475.03px;font-size:12px;color:#ff0000;transform:scaleX(0.9503);">-4.60</span>
<span class="t" style="left:1303.00px;top:475.03px;font-size:12px;color:#0000ff;transform:scaleX(0.8990);">1 600.00</span>
<div style="left:50px;top:493px;width:1299px;height:19px;background:#e5e5e5;"></div>
<div style="left:745px;top:493px;width:106px;height:19px;background:#40ea40;"></div>
<div style="left:50px;top:512px;width:1299px;height:1px;background:#b4b4b4;"></div>
<svg style="left:54px;top:495px" width="12" height="16" viewBox="0 0 12 16" fill="none" stroke="#0a4595"><rect x="0.600" y="0.500" width="9.800" height="14" rx="2.400" fill="#fff" stroke-width="1.250"/><path d="M4 4.500h3M4 7.500h3" stroke-width="1.150"/></svg>
<span class="t" style="left:71.00px;top:495.03px;font-size:12px;transform:scaleX(0.9064);">2025.12.11 17:32:45</span>
<span class="t" style="left:242.50px;top:495.03px;font-size:12px;letter-spacing:-0.041px;">xagusd</span>
<span class="t" style="left:290.00px;top:495.03px;font-size:12px;transform:scaleX(0.8989);">54297820468</span>
<span class="t" style="left:400.00px;top:495.03px;font-size:12px;letter-spacing:0.320px;">buy</span>
<span class="t" style="left:512.00px;top:495.03px;font-size:12px;transform:scaleX(0.8989);">0.1</span>
<span class="t" style="left:601.00px;top:495.03px;font-size:12px;transform:scaleX(0.8991);">62.900</span>
<span class="t" style="left:708.00px;top:495.03px;font-size:12px;transform:scaleX(0.8991);">57.500</span>
<span class="t" style="left:815.00px;top:495.03px;font-size:12px;transform:scaleX(0.8991);">68.300</span>
<span class="t" style="left:889.00px;top:495.03px;font-size:12px;transform:scaleX(0.8991);">2025.12.22 03:39:20</span>
<span class="t" style="left:1062.00px;top:495.03px;font-size:12px;transform:scaleX(0.8991);">68.300</span>
<span class="t" style="left:1170.00px;top:495.03px;font-size:12px;color:#ff0000;transform:scaleX(0.9403);">-10.35</span>
<span class="t" style="left:1303.00px;top:495.03px;font-size:12px;color:#0000ff;transform:scaleX(0.8990);">2 700.00</span>
<div style="left:745px;top:513px;width:106px;height:19px;background:#40ea40;"></div>
<div style="left:50px;top:532px;width:1299px;height:1px;background:#b4b4b4;"></div>
<svg style="left:54px;top:515px" width="12" height="16" viewBox="0 0 12 16" fill="none" stroke="#0a4595"><rect x="0.600" y="0.500" width="9.800" height="14" rx="2.400" fill="#fff" stroke-width="1.250"/><path d="M4 4.500h3M4 7.500h3" stroke-width="1.150"/></svg>
<span class="t" style="left:71.00px;top:515.03px;font-size:12px;transform:scaleX(0.9064);">2025.12.11 17:51:36</span>
<span class="t" style="left:242.50px;top:515.03px;font-size:12px;letter-spacing:-0.041px;">xauusd</span>
<span class="t" style="left:290.00px;top:515.03px;font-size:12px;transform:scaleX(0.8989);">54279294956</span>
<span class="t" style="left:400.00px;top:515.03px;font-size:12px;letter-spacing:0.320px;">buy</span>
<span class="t" style="left:512.00px;top:515.03px;font-size:12px;transform:scaleX(0.8989);">0.1</span>
<span class="t" style="left:595.00px;top:515.03px;font-size:12px;transform:scaleX(0.8988);">4260.00</span>
<span class="t" style="left:702.00px;top:515.03px;font-size:12px;transform:scaleX(0.8988);">4140.00</span>
<span class="t" style="left:809.00px;top:515.03px;font-size:12px;transform:scaleX(0.8988);">4380.00</span>
<span class="t" style="left:889.00px;top:515.03px;font-size:12px;transform:scaleX(0.8991);">2025.12.22 03:40:02</span>
<span class="t" style="left:1056.00px;top:515.03px;font-size:12px;transform:scaleX(0.8988);">4380.00</span>
<span class="t" style="left:1170.00px;top:515.03px;font-size:12px;color:#ff0000;transform:scaleX(0.9656);">-11.34</span>
<span class="t" style="left:1303.00px;top:515.03px;font-size:12px;color:#0000ff;transform:scaleX(0.8990);">1 200.00</span>
<div style="left:50px;top:533px;width:1299px;height:19px;background:#e5e5e5;"></div>
<div style="left:745px;top:533px;width:106px;height:19px;background:#40ea40;"></div>
<div style="left:50px;top:552px;width:1299px;height:1px;background:#b4b4b4;"></div>
<svg style="left:54px;top:535px" width="12" height="16" viewBox="0 0 12 16" fill="none" stroke="#0a4595"><rect x="0.600" y="0.500" width="9.800" height="14" rx="2.400" fill="#fff" stroke-width="1.250"/><path d="M4 4.500h3M4 7.500h3" stroke-width="1.150"/></svg>
<span class="t" style="left:71.00px;top:535.03px;font-size:12px;transform:scaleX(0.9064);">2025.12.11 19:08:38</span>
<span class="t" style="left:242.50px;top:535.03px;font-size:12px;letter-spacing:-0.041px;">xauusd</span>
<span class="t" style="left:290.00px;top:535.03px;font-size:12px;transform:scaleX(0.8989);">54251922977</span>
<span class="t" style="left:400.00px;top:535.03px;font-size:12px;letter-spacing:0.320px;">buy</span>
<span class="t" style="left:512.00px;top:535.03px;font-size:12px;transform:scaleX(0.8989);">0.1</span>
<span class="t" style="left:595.00px;top:535.03px;font-size:12px;transform:scaleX(0.8988);">4280.00</span>
<span class="t" style="left:702.00px;top:535.03px;font-size:12px;transform:scaleX(0.8988);">4150.00</span>
<span class="t" style="left:809.00px;top:535.03px;font-size:12px;transform:scaleX(0.8988);">4410.00</span>
<span class="t" style="left:889.00px;top:535.03px;font-size:12px;transform:scaleX(0.8991);">2025.12.22 08:45:53</span>
<span class="t" style="left:1056.00px;top:535.03px;font-size:12px;transform:scaleX(0.8988);">4410.00</span>
<span class="t" style="left:1170.00px;top:535.03px;font-size:12px;color:#ff0000;transform:scaleX(0.9656);">-11.34</span>
<span class="t" style="left:1303.00px;top:535.03px;font-size:12px;color:#0000ff;transform:scaleX(0.8990);">1 300.00</span>
<div style="left:745px;top:553px;width:106px;height:19px;background:#40ea40;"></div>
<div style="left:50px;top:572px;width:1299px;height:1px;background:#b4b4b4;"></div>
<svg style="left:54px;top:555px" width="12" height="16" viewBox="0 0 12 16" fill="none" stroke="#0a4595"><rect x="0.600" y="0.500" width="9.800" height="14" rx="2.400" fill="#fff" stroke-width="1.250"/><path d="M4 4.500h3M4 7.500h3" stroke-width="1.150"/></svg>
<span class="t" style="left:71.00px;top:555.03px;font-size:12px;transform:scaleX(0.8991);">2025.12.12 12:46:30</span>
<span class="t" style="left:242.50px;top:555.03px;font-size:12px;letter-spacing:-0.041px;">xauusd</span>
<span class="t" style="left:290.00px;top:555.03px;font-size:12px;transform:scaleX(0.8989);">54314160205</span>
<span class="t" style="left:400.00px;top:555.03px;font-size:12px;letter-spacing:0.320px;">buy</span>
<span class="t" style="left:512.00px;top:555.03px;font-size:12px;transform:scaleX(0.8989);">0.2</span>
<span class="t" style="left:595.00px;top:555.03px;font-size:12px;transform:scaleX(0.8988);">4330.00</span>
<span class="t" style="left:702.00px;top:555.03px;font-size:12px;transform:scaleX(0.8988);">4200.00</span>
<span class="t" style="left:809.00px;top:555.03px;font-size:12px;transform:scaleX(0.8988);">4460.00</span>
<span class="t" style="left:889.00px;top:555.03px;font-size:12px;transform:scaleX(0.8991);">2025.12.23 02:05:00</span>
<span class="t" style="left:1056.00px;top:555.03px;font-size:12px;transform:scaleX(0.8988);">4460.00</span>
<span class="t" style="left:1170.00px;top:555.03px;font-size:12px;color:#ff0000;transform:scaleX(0.9403);">-22.68</span>
<span class="t" style="left:1303.00px;top:555.03px;font-size:12px;color:#0000ff;transform:scaleX(0.8990);">2 600.00</span>
<div style="left:50px;top:573px;width:1299px;height:19px;background:#e5e5e5;"></div>
<div style="left:745px;top:573px;width:106px;height:19px;background:#40ea40;"></div>
<div style="left:50px;top:592px;width:1299px;height:1px;background:#b4b4b4;"></div>
<svg style="left:54px;top:575px" width="12" height="16" viewBox="0 0 12 16" fill="none" stroke="#0a4595"><rect x="0.600" y="0.500" width="9.800" height="14" rx="2.400" fill="#fff" stroke-width="1.250"/><path d="M4 4.500h3M4 7.500h3" stroke-width="1.150"/></svg>
<span class="t" style="left:71.00px;top:575.03px;font-size:12px;transform:scaleX(0.8991);">2025.12.17 03:33:14</span>
<span class="t" style="left:242.50px;top:575.03px;font-size:12px;letter-spacing:-0.041px;">xagusd</span>
<span class="t" style="left:290.00px;top:575.03px;font-size:12px;transform:scaleX(0.8989);">54331391551</span>
<span class="t" style="left:400.00px;top:575.03px;font-size:12px;letter-spacing:0.320px;">buy</span>
<span class="t" style="left:512.00px;top:575.03px;font-size:12px;transform:scaleX(0.8989);">0.2</span>
<span class="t" style="left:601.00px;top:575.03px;font-size:12px;transform:scaleX(0.8991);">64.700</span>
<span class="t" style="left:708.00px;top:575.03px;font-size:12px;transform:scaleX(0.8991);">57.400</span>
<span class="t" style="left:815.00px;top:575.03px;font-size:12px;transform:scaleX(0.8991);">72.000</span>
<span class="t" style="left:889.00px;top:575.03px;font-size:12px;transform:scaleX(0.8991);">2025.12.24 03:00:01</span>
<span class="t" style="left:1062.00px;top:575.03px;font-size:12px;transform:scaleX(0.8991);">72.000</span>
<span class="t" style="left:1170.00px;top:575.03px;font-size:12px;color:#ff0000;transform:scaleX(0.9403);">-16.10</span>
<span class="t" style="left:1303.00px;top:575.03px;font-size:12px;color:#0000ff;transform:scaleX(0.8990);">7 300.00</span>
<div style="left:745px;top:593px;width:106px;height:19px;background:#40ea40;"></div>
<div style="left:50px;top:612px;width:1299px;height:1px;background:#b4b4b4;"></div>
<svg style="left:54px;top:595px" width="12" height="16" viewBox="0 0 12 16" fill="none" stroke="#0a4595"><rect x="0.600" y="0.500" width="9.800" height="14" rx="2.400" fill="#fff" stroke-width="1.250"/><path d="M4 4.500h3M4 7.500h3" stroke-width="1.150"/></svg>
<span class="t" style="left:71.00px;top:595.03px;font-size:12px;transform:scaleX(0.8991);">2025.12.17 19:26:02</span>
<span class="t" style="left:242.50px;top:595.03px;font-size:12px;letter-spacing:-0.041px;">xagusd</span>
<span class="t" style="left:290.00px;top:595.03px;font-size:12px;transform:scaleX(0.8989);">54360702538</span>
<span class="t" style="left:400.00px;top:595.03px;font-size:12px;letter-spacing:0.320px;">buy</span>
<span class="t" style="left:512.00px;top:595.03px;font-size:12px;transform:scaleX(0.8989);">0.2</span>
<span class="t" style="left:601.00px;top:595.03px;font-size:12px;transform:scaleX(0.8991);">66.600</span>
<span class="t" style="left:708.00px;top:595.03px;font-size:12px;transform:scaleX(0.8991);">61.600</span>
<span class="t" style="left:815.00px;top:595.03px;font-size:12px;transform:scaleX(0.8991);">71.600</span>
<span class="t" style="left:889.00px;top:595.03px;font-size:12px;transform:scaleX(0.8991);">2025.12.24 01:07:47</span>
<span class="t" style="left:1062.00px;top:595.03px;font-size:12px;transform:scaleX(0.8991);">71.600</span>
<span class="t" style="left:1170.00px;top:595.03px;font-size:12px;color:#ff0000;transform:scaleX(0.9403);">-16.10</span>
<span class="t" style="left:1303.00px;top:595.03px;font-size:12px;color:#0000ff;transform:scaleX(0.8990);">5 000.00</span>
<div style="left:50px;top:613px;width:1299px;height:19px;background:#e5e5e5;"></div>
<div style="left:745px;top:613px;width:106px;height:19px;background:#40ea40;"></div>
<div style="left:50px;top:632px;width:1299px;height:1px;background:#b4b4b4;"></div>
<svg style="left:54px;top:615px" width="12" height="16" viewBox="0 0 12 16" fill="none" stroke="#0a4595"><rect x="0.600" y="0.500" width="9.800" height="14" rx="2.400" fill="#fff" stroke-width="1.250"/><path d="M4 4.500h3M4 7.500h3" stroke-width="1.150"/></svg>
<span class="t" style="left:71.00px;top:615.03px;font-size:12px;transform:scaleX(0.8991);">2025.12.18 18:10:23</span>
<span class="t" style="left:242.50px;top:615.03px;font-size:12px;letter-spacing:-0.041px;">xauusd</span>
<span class="t" style="left:290.00px;top:615.03px;font-size:12px;transform:scaleX(0.8989);">54374765050</span>
<span class="t" style="left:400.00px;top:615.03px;font-size:12px;letter-spacing:0.320px;">buy</span>
<span class="t" style="left:512.00px;top:615.03px;font-size:12px;transform:scaleX(0.8989);">0.2</span>
<span class="t" style="left:595.00px;top:615.03px;font-size:12px;transform:scaleX(0.8988);">4350.00</span>
<span class="t" style="left:702.00px;top:615.03px;font-size:12px;transform:scaleX(0.8988);">4270.00</span>
<span class="t" style="left:809.00px;top:615.03px;font-size:12px;transform:scaleX(0.8988);">4430.00</span>
<span class="t" style="left:889.00px;top:615.03px;font-size:12px;transform:scaleX(0.8991);">2025.12.22 17:45:02</span>
<span class="t" style="left:1056.00px;top:615.03px;font-size:12px;transform:scaleX(0.8988);">4430.00</span>
<span class="t" style="left:1176.00px;top:615.03px;font-size:12px;color:#ff0000;transform:scaleX(0.9503);">-5.04</span>
<span class="t" style="left:1303.00px;top:615.03px;font-size:12px;color:#0000ff;transform:scaleX(0.8990);">1 600.00</span>
<div style="left:745px;top:633px;width:106px;height:19px;background:#40ea40;"></div>
<div style="left:50px;top:652px;width:1299px;height:1px;background:#b4b4b4;"></div>
<svg style="left:54px;top:635px" width="12" height="16" viewBox="0 0 12 16" fill="none" stroke="#0a4595"><rect x="0.600" y="0.500" width="9.800" height="14" rx="2.400" fill="#fff" stroke-width="1.250"/><path d="M4 4.500h3M4 7.500h3" stroke-width="1.150"/></svg>
<span class="t" style="left:71.00px;top:635.03px;font-size:12px;transform:scaleX(0.8991);">2025.12.18 18:12:41</span>
<span class="t" style="left:242.50px;top:635.03px;font-size:12px;letter-spacing:-0.041px;">xauusd</span>
<span class="t" style="left:290.00px;top:635.03px;font-size:12px;transform:scaleX(0.8989);">54345457701</span>
<span class="t" style="left:400.00px;top:635.03px;font-size:12px;letter-spacing:0.320px;">buy</span>
<span class="t" style="left:512.00px;top:635.03px;font-size:12px;transform:scaleX(0.8989);">0.2</span>
<span class="t" style="left:595.00px;top:635.03px;font-size:12px;transform:scaleX(0.8988);">4360.00</span>
<span class="t" style="left:702.00px;top:635.03px;font-size:12px;transform:scaleX(0.8988);">4180.00</span>
<span class="t" style="left:809.00px;top:635.03px;font-size:12px;transform:scaleX(0.8988);">4540.00</span>
<span class="t" style="left:889.00px;top:635.03px;font-size:12px;transform:scaleX(0.8991);">2025.12.26 17:34:27</span>
<span class="t" style="left:1056.00px;top:635.03px;font-size:12px;transform:scaleX(0.8988);">4540.00</span>
<span class="t" style="left:1170.00px;top:635.03px;font-size:12px;color:#ff0000;transform:scaleX(0.9403);">-20.16</span>
<span class="t" style="left:1303.00px;top:635.03px;font-size:12px;color:#0000ff;transform:scaleX(0.8990);">3 600.00</span>
<div style="left:50px;top:653px;width:1299px;height:19px;background:#e5e5e5;"></div>
<div style="left:638px;top:653px;width:106px;height:19px;background:#ff8888;"></div>
<div style="left:50px;top:672px;width:1299px;height:1px;background:#b4b4b4;"></div>
<svg style="left:54px;top:655px" width="12" height="16" viewBox="0 0 12 16" fill="none" stroke="#0a4595"><rect x="0.600" y="0.500" width="9.800" height="14" rx="2.400" fill="#fff" stroke-width="1.250"/><path d="M4 4.500h3M4 7.500h3" stroke-width="1.150"/></svg>
<span class="t" style="left:71.00px;top:655.03px;font-size:12px;transform:scaleX(0.8991);">2025.12.24 02:43:09</span>
<span class="t" style="left:242.50px;top:655.03px;font-size:12px;letter-spacing:-0.041px;">xagusd</span>
<span class="t" style="left:290.00px;top:655.03px;font-size:12px;transform:scaleX(0.8989);">54424444087</span>
<span class="t" style="left:400.00px;top:655.03px;font-size:12px;letter-spacing:0.320px;">buy</span>
<span class="t" style="left:512.00px;top:655.03px;font-size:12px;transform:scaleX(0.8989);">0.3</span>
<span class="t" style="left:601.00px;top:655.03px;font-size:12px;transform:scaleX(0.8991);">72.000</span>
<span class="t" style="left:708.00px;top:655.03px;font-size:12px;transform:scaleX(0.8991);">68.000</span>
<span class="t" style="left:815.00px;top:655.03px;font-size:12px;transform:scaleX(0.8991);">76.000</span>
<span class="t" style="left:889.00px;top:655.03px;font-size:12px;transform:scaleX(0.8991);">2025.12.26 01:07:35</span>
<span class="t" style="left:1062.00px;top:655.03px;font-size:12px;transform:scaleX(0.8991);">68.000</span>
<span class="t" style="left:1170.00px;top:655.03px;font-size:12px;color:#ff0000;transform:scaleX(0.9403);">-13.80</span>
<span class="t" style="left:1298.00px;top:655.03px;font-size:12px;color:#ff0000;transform:scaleX(0.9267);">-6 000.00</span>
<div style="left:188px;top:173px;width:1px;height:499px;background:#b4b4b4;"></div>
<div style="left:284px;top:173px;width:1px;height:499px;background:#b4b4b4;"></div>
<div style="left:359px;top:173px;width:1px;height:499px;background:#b4b4b4;"></div>
<div style="left:423px;top:173px;width:1px;height:499px;background:#b4b4b4;"></div>
<div style="left:530px;top:173px;width:1px;height:499px;background:#b4b4b4;"></div>
<div style="left:637px;top:173px;width:1px;height:499px;background:#b4b4b4;"></div>
<div style="left:744px;top:173px;width:1px;height:499px;background:#b4b4b4;"></div>
<div style="left:851px;top:173px;width:1px;height:499px;background:#b4b4b4;"></div>
<div style="left:991px;top:173px;width:1px;height:499px;background:#b4b4b4;"></div>
<div style="left:1098px;top:173px;width:1px;height:499px;background:#b4b4b4;"></div>
<div style="left:1205px;top:173px;width:1px;height:499px;background:#b4b4b4;"></div>
<div style="left:50px;top:672px;width:1299px;height:21px;background:#b9b9b9;"></div>
<svg style="left:53px;top:676px" width="13" height="13" viewBox="0 0 13 13" fill="none" stroke="#000" stroke-width="1.200"><circle cx="6.500" cy="6.500" r="5.300"/><path d="M3.500 6.500h6M6.500 3.500v6"/></svg>
<span class="t" style="left:71.00px;top:674.53px;font-size:12px;font-weight:700;letter-spacing:0.062px;">Profitto: 40 742.29</span>
<span class="t" style="left:182.00px;top:674.53px;font-size:12px;font-weight:700;letter-spacing:-0.182px;">Credito: 0.00</span>
<span class="t" style="left:259.50px;top:674.53px;font-size:12px;font-weight:700;letter-spacing:-0.115px;">Deposito: 10 000.00</span>
<span class="t" style="left:376.50px;top:674.53px;font-size:12px;font-weight:700;letter-spacing:-0.184px;">Prelievo: 0.00</span>
<span class="t" style="left:458.50px;top:674.53px;font-size:12px;font-weight:700;letter-spacing:-0.244px;">Bilancio: 50 742.29</span>
<span class="t" style="left:1160.50px;top:674.53px;font-size:12px;font-weight:700;transform:scaleX(0.9950);">-857.71</span>
<span class="t" style="left:1290.00px;top:674.53px;font-size:12px;font-weight:700;transform:scaleX(1.0301);">41 600.00</span>
<div style="left:50px;top:703px;width:222px;height:1px;background:#000;"></div>
<div style="left:349px;top:703px;width:1017px;height:1px;background:#000;"></div>
<div style="left:32px;top:640px;width:16px;height:64px;overflow:hidden"><span style="position:absolute;left:1.5px;top:69px;transform-origin:0 0;transform:rotate(-90deg);font-weight:400;-webkit-text-stroke:.35px #000;font-size:12px;line-height:14px;white-space:pre">Attrezzi</span></div>
</body></html>
